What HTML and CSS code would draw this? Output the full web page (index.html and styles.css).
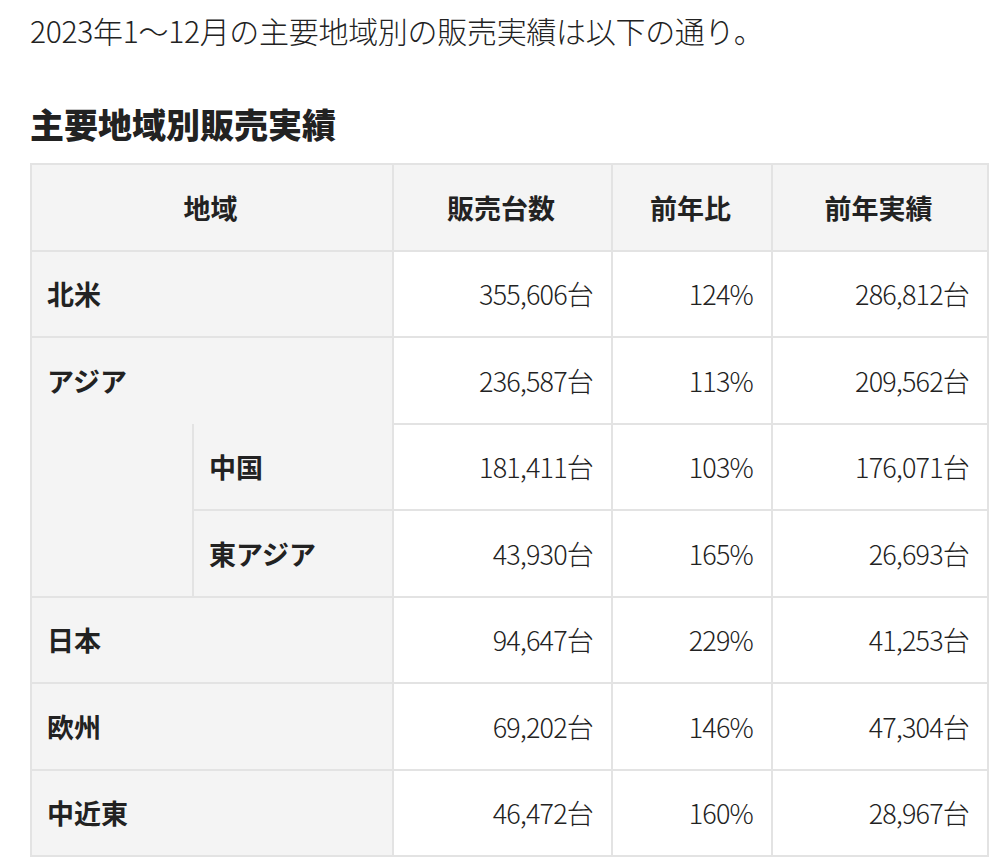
FILE: index.html
```html
<!DOCTYPE html>
<html lang="ja">
<head>
<meta charset="utf-8">
<link rel="stylesheet" href="styles.css">
</head>
<body>
<p class="intro">2023年1〜12月の主要地域別の販売実績は以下の通り。</p>
<h2 class="title">主要地域別販売実績</h2>
<table class="sales">
  <colgroup>
    <col class="c1"><col class="c2"><col class="c3"><col class="c4"><col class="c5">
  </colgroup>
  <thead>
    <tr>
      <th colspan="2">地域</th>
      <th>販売台数</th>
      <th>前年比</th>
      <th>前年実績</th>
    </tr>
  </thead>
  <tbody>
    <tr>
      <th colspan="2" class="region">北米</th>
      <td>355,606台</td><td>124%</td><td>286,812台</td>
    </tr>
    <tr>
      <th colspan="2" class="region open-bottom">アジア</th>
      <td>236,587台</td><td>113%</td><td>209,562台</td>
    </tr>
    <tr>
      <th rowspan="2" class="region blank"></th>
      <th class="region">中国</th>
      <td>181,411台</td><td>103%</td><td>176,071台</td>
    </tr>
    <tr>
      <th class="region">東アジア</th>
      <td>43,930台</td><td>165%</td><td>26,693台</td>
    </tr>
    <tr>
      <th colspan="2" class="region">日本</th>
      <td>94,647台</td><td>229%</td><td>41,253台</td>
    </tr>
    <tr>
      <th colspan="2" class="region">欧州</th>
      <td>69,202台</td><td>146%</td><td>47,304台</td>
    </tr>
    <tr>
      <th colspan="2" class="region">中近東</th>
      <td>46,472台</td><td>160%</td><td>28,967台</td>
    </tr>
  </tbody>
</table>
</body>
</html>
```

FILE: styles.css
```css
html, body {
  background: #ffffff;
}
body {
  margin: 0;
  padding: 8px 13px 0 30px;
  font-family: "Noto Sans CJK JP", sans-serif;
  color: #222222;
}
.intro {
  margin: 0;
  font-size: 30px;
  line-height: 45px;
  letter-spacing: -0.01em;
  font-weight: 300;
}
.title {
  margin: 47px 0 15px 0;
  font-size: 34px;
  line-height: 48px;
  font-weight: 900;
}
.sales {
  border-collapse: collapse;
  table-layout: fixed;
  width: 957px;
  border: 2px solid #e3e3e3;
  font-size: 27px;
}
.c1 { width: 162px; }
.c2 { width: 200px; }
.c3 { width: 219px; }
.c4 { width: 160px; }
.c5 { width: 216px; }
.sales th,
.sales td {
  border: 2px solid #e3e3e3;
  height: 86.5px;
  padding: 0 18px 0 15px;
  box-sizing: border-box;
  vertical-align: middle;
}
.sales thead th {
  background: #f4f4f4;
  text-align: center;
  font-weight: 700;
}
.sales .region {
  background: #f4f4f4;
  text-align: left;
  font-weight: 700;
}
.sales td {
  background: #ffffff;
  text-align: right;
  font-weight: 300;
  letter-spacing: -0.03em;
}
.sales .open-bottom {
  border-bottom: hidden;
}
.sales .blank {
  border-top: hidden;
}
```
